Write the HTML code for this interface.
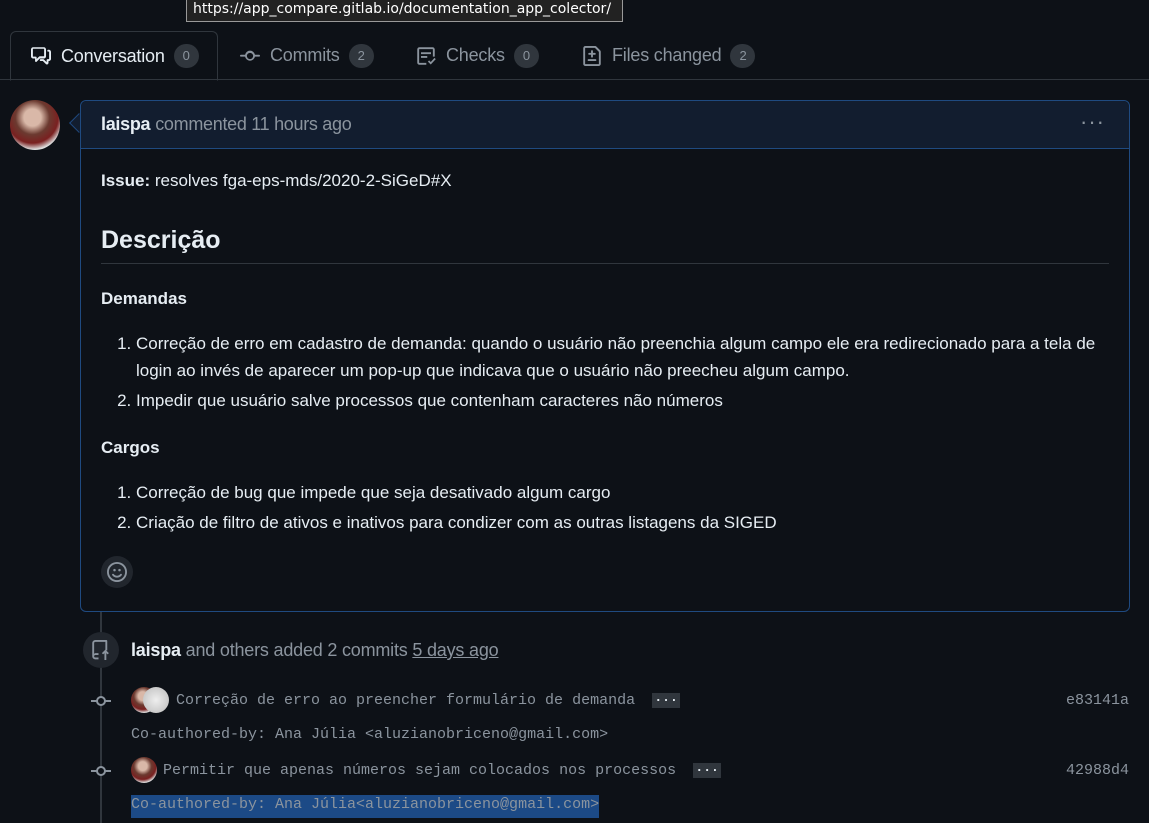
<!DOCTYPE html>
<html><head><meta charset="utf-8"><style>
*{box-sizing:border-box;margin:0;padding:0}
body{width:1149px;height:823px;overflow:hidden;background:#0d1117;font-family:"Liberation Sans",sans-serif;color:#e6edf3;position:relative}
.tip{position:absolute;left:186px;top:0;width:437px;height:22px;background:#222;border:1px solid #999;border-top:none;color:#fff;font-family:"DejaVu Sans",sans-serif;font-size:14px;padding:1px 6px;white-space:nowrap;overflow:hidden}
.tabs{position:absolute;left:0;top:31px;width:1149px;height:49px;border-bottom:1px solid #30363d}
.tab{position:absolute;top:0;height:49px;display:flex;align-items:center;font-size:18px;color:#8b949e;letter-spacing:-0.2px}
.tab.act{left:10px;width:208px;border:1px solid #30363d;border-bottom:1px solid #0d1117;border-radius:6px 6px 0 0;color:#e6edf3;padding-left:20px;height:50px}
.cnt{display:inline-block;background:#30363d;color:#8b949e;font-size:13px;border-radius:12px;min-width:25px;height:24px;line-height:24px;text-align:center;margin-left:9px}
.tab svg{margin-right:10px}
.av{position:absolute;border-radius:50%;background:radial-gradient(circle at 45% 35%,#d9b8a8 0 20%,#6b3a30 40%,#7a2020 60%,#ddd 75%)}
.box{position:absolute;left:80px;top:100px;width:1050px;height:512px;border:1px solid #1f4a80;border-radius:6px}
.bh{height:48px;background:#121d2f;border-bottom:1px solid #1f4a80;border-radius:6px 6px 0 0;display:flex;align-items:center;padding-left:20px;font-size:18px;color:#8b949e;letter-spacing:-0.3px}
.bh b{color:#e6edf3;margin-right:5px}
.arrow{position:absolute;left:72px;top:116px;width:14px;height:14px;background:#121d2f;border-left:1px solid #1f4a80;border-bottom:1px solid #1f4a80;transform:rotate(45deg)}
.bd{padding:0 20px;font-size:17px;line-height:27px}
h2{font-size:25px;font-weight:bold;border-bottom:1px solid #30363d;padding-bottom:8px;margin-top:31px;line-height:30px}
ol{padding-left:35px}
.mono{font-family:"Liberation Mono",monospace;font-size:15px;color:#8b949e}
.dots{display:inline-block;background:#30363d;width:28px;height:15px;vertical-align:middle;color:#e6edf3;font-size:13px;line-height:9px;text-align:center;font-weight:bold;margin-left:8px}
</style></head><body>
<div class="tip">https://app_compare.gitlab.io/documentation_app_colector/</div>
<div class="tabs">
<div class="tab act"><svg width="20" height="20" viewBox="0 0 16 16" fill="#e6edf3"><path d="M1.75 1h8.5c.97 0 1.75.78 1.75 1.75v5.5A1.75 1.75 0 0110.25 10H7.06l-2.57 2.57A.75.75 0 013.25 12v-2h-1.5A1.75 1.75 0 010 8.250v-5.5C0 1.78.78 1 1.75 1zM1.5 2.75v5.5c0 .14.11.25.25.25h2a.75.75 0 01.75.75v1.19l2.030-2.03a.75.75 0 01.53-.22h3.19a.25.25 0 00.25-.25v-5.5a.25.25 0 00-.25-.25h-8.5a.25.25 0 00-.25.25zm13 2a.25.25 0 00-.25-.25h-.5a.75.75 0 010-1.5h.5c.97 0 1.75.78 1.75 1.75v5.5A1.75 1.75 0 0114.25 12H14v1.54a1.25 1.25 0 01-2.13.88L9.44 12H7.75a.75.75 0 010-1.5h2c.2 0 .39.08.53.22l2.22 2.22v-1.69a.75.75 0 01.75-.75h1a.25.25 0 00.25-.25z"/></svg>Conversation<span class="cnt">0</span></div>
<div class="tab" style="left:240px"><svg width="20" height="20" viewBox="0 0 16 16" fill="#8b949e"><path d="M11.93 8.5a4 4 0 01-7.86 0H.75a.75.75 0 010-1.5h3.32a4 4 0 017.86 0h3.32a.75.75 0 010 1.5zM8 10.5a2.5 2.5 0 100-5 2.5 2.5 0 000 5z"/></svg>Commits<span class="cnt">2</span></div>
<div class="tab" style="left:416px"><svg width="20" height="20" viewBox="0 0 16 16" fill="#8b949e"><path d="M2.75 1h10.5c.97 0 1.75.78 1.75 1.75v5.75h-1.5V2.75a.25.25 0 00-.25-.25H2.75a.25.25 0 00-.25.25v10.5c0 .14.11.25.25.25h5.5V15h-5.5A1.75 1.75 0 011 13.25V2.75C1 1.78 1.78 1 2.75 1zM4 5h8v1.5H4zm0 3h5v1.5H4zm11.8 2.5l-4 4.3-2.3-2.3 1-1 1.3 1.3 3-3.3z"/></svg>Checks<span class="cnt">0</span></div>
<div class="tab" style="left:582px"><svg width="20" height="20" viewBox="0 0 16 16" fill="#8b949e"><path d="M1 1.75C1 .78 1.78 0 2.75 0h7.59c.46 0 .91.18 1.24.51l2.91 2.91c.33.33.51.78.51 1.24v9.59A1.75 1.75 0 0113.25 16H2.75A1.75 1.75 0 011 14.250zm1.75-.25a.25.25 0 00-.25.25v12.5c0 .14.11.25.25.25h10.5a.25.25 0 00.25-.25V4.66L10.34 1.5zM8 3.25a.75.75 0 01.75.75v1.5h1.5a.75.75 0 010 1.5h-1.5v1.5a.75.75 0 01-1.5 0V7h-1.5a.75.75 0 010-1.5h1.5V4A.75.75 0 018 3.25zM5.25 10.5h5.5a.75.75 0 010 1.5h-5.5a.75.75 0 010-1.5z"/></svg>Files changed<span class="cnt">2</span></div>
</div>
<div class="av" style="left:10px;top:100px;width:50px;height:50px"></div>
<div style="position:absolute;left:100px;top:612px;width:2px;height:211px;background:#30363d"></div>
<div class="arrow"></div>
<div class="box">
<div class="bh"><b>laispa</b> commented 11 hours ago<span style="position:absolute;right:24px;top:8px;color:#8b949e;font-size:22px;letter-spacing:1px">···</span></div>
<div class="bd">
<p style="margin-top:18px"><b>Issue:</b> resolves fga-eps-mds/2020-2-SiGeD#X</p>
<h2>Descrição</h2>
<p style="margin-top:21px"><b>Demandas</b></p>
<ol style="margin-top:18px"><li>Correção de erro em cadastro de demanda: quando o usuário não preenchia algum campo ele era redirecionado para a tela de login ao invés de aparecer um pop-up que indicava que o usuário não preecheu algum campo.</li><li style="margin-top:3px">Impedir que usuário salve processos que contenham caracteres não números</li></ol>
<p style="margin-top:20px"><b>Cargos</b></p>
<ol style="margin-top:18px"><li>Correção de bug que impede que seja desativado algum cargo</li><li style="margin-top:3px">Criação de filtro de ativos e inativos para condizer com as outras listagens da SIGED</li></ol>
<div style="margin-top:20px;width:32px;height:32px;border-radius:50%;background:#21262d;display:flex;align-items:center;justify-content:center"><svg width="20" height="20" viewBox="0 0 16 16" fill="#8b949e"><path d="M8 0a8 8 0 110 16A8 8 0 018 0zM1.5 8a6.5 6.5 0 1013 0 6.5 6.5 0 00-13 0zm3.82 1.64A3.5 3.5 0 008 11a3.5 3.5 0 002.68-1.36.75.75 0 011.14.97A5 5 0 018 12.5a5 5 0 01-3.82-1.89.75.75 0 011.14-.97zM5 6.5a1 1 0 112 0 1 1 0 01-2 0zm4 0a1 1 0 112 0 1 1 0 01-2 0z"/></svg></div>
</div></div>
<div style="position:absolute;left:83px;top:632px;width:36px;height:36px;border-radius:50%;background:#21262d;display:flex;align-items:center;justify-content:center"><svg width="20" height="20" viewBox="0 0 16 16" fill="#8b949e"><path d="M1 2.5A2.5 2.5 0 013.5 0h8.75c.41 0 .75.34.75.75v7.5h-1.5V1.5h-8A1 1 0 002.5 2.5v8.55A2.5 2.5 0 013.5 10.5H6V12H3.5a1 1 0 000 2H6v1.5H3.5A2.5 2.5 0 011 13zm10.5 5.2l2.8 2.8-1 1-1.05-1.05V16h-1.5v-5.55L9.7 11.5l-1-1z"/></svg></div>
<div style="position:absolute;left:131px;top:640px;font-size:18px;color:#8b949e;letter-spacing:-0.2px"><b style="color:#e6edf3">laispa</b> and others added 2 commits <u>5 days ago</u></div>
<svg style="position:absolute;left:91px;top:694px" width="20" height="14" viewBox="0 0 20 14"><circle cx="10" cy="7" r="4" fill="#0d1117" stroke="#8b949e" stroke-width="2"/><path d="M0 7h6M14 7h6" stroke="#8b949e" stroke-width="2"/></svg>
<div class="av" style="left:131px;top:687px;width:26px;height:26px"></div><div class="av" style="left:143px;top:687px;width:26px;height:26px;background:radial-gradient(circle,#eee,#bbb)"></div>
<div class="mono" style="position:absolute;left:176px;top:692px">Correção de erro ao preencher formulário de demanda <span class="dots">...</span></div>
<div class="mono" style="position:absolute;right:20px;top:692px">e83141a</div>
<div class="mono" style="position:absolute;left:131px;top:726px">Co-authored-by: Ana Júlia &lt;aluzianobriceno@gmail.com&gt;</div>
<svg style="position:absolute;left:91px;top:764px" width="20" height="14" viewBox="0 0 20 14"><circle cx="10" cy="7" r="4" fill="#0d1117" stroke="#8b949e" stroke-width="2"/><path d="M0 7h6M14 7h6" stroke="#8b949e" stroke-width="2"/></svg>
<div class="av" style="left:131px;top:757px;width:26px;height:26px"></div>
<div class="mono" style="position:absolute;left:163px;top:762px">Permitir que apenas números sejam colocados nos processos <span class="dots">...</span></div>
<div class="mono" style="position:absolute;right:20px;top:762px">42988d4</div>
<div class="mono" style="position:absolute;left:131px;top:795px;background:#1c4a86;padding:1px 0;height:23px">Co-authored-by: Ana Júlia&lt;aluzianobriceno@gmail.com&gt;</div>
</body></html>
